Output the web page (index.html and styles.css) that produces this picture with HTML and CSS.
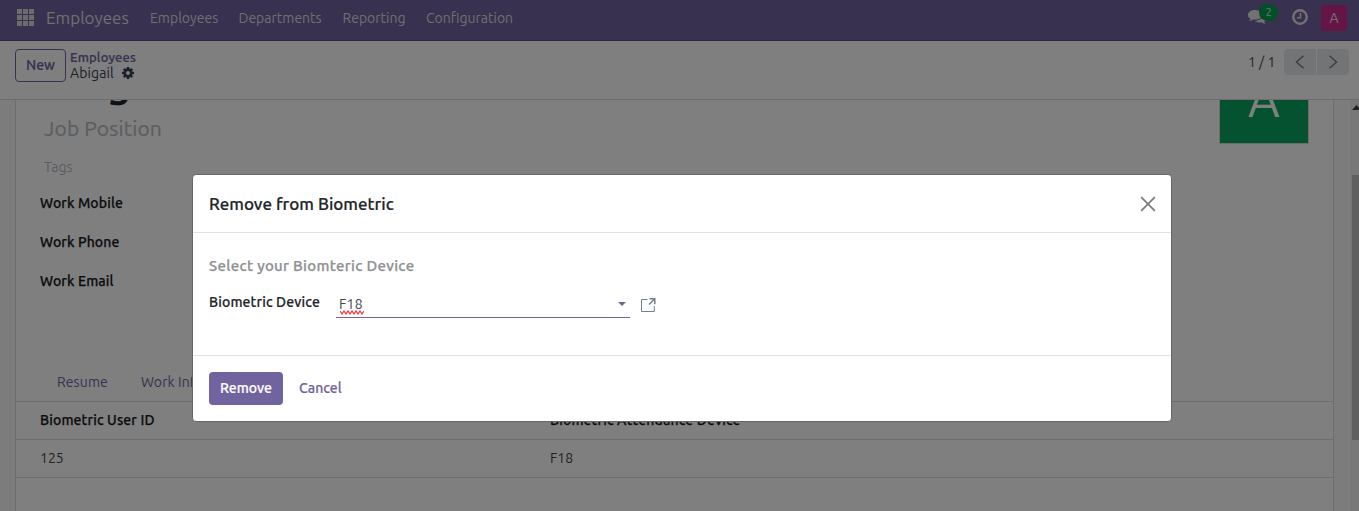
FILE: index.html
```html
<!DOCTYPE html>
<html lang="en">
<head>
<meta charset="utf-8">
<title>Employees</title>
<link rel="stylesheet" href="styles.css">
</head>
<body>
<div class="app">
  <header class="navbar">
    <svg class="apps" width="17" height="17" viewBox="0 0 17 17" fill="currentColor"><path d="M0 0h5v5H0zM6 0h5v5H6zM12 0h5v5h-5zM0 6h5v5H0zM6 6h5v5H6zM12 6h5v5h-5zM0 12h5v5H0zM6 12h5v5H6zM12 12h5v5h-5z"/></svg>
    <span class="brand">Employees</span>
    <nav class="menu">
      <span class="m-emp">Employees</span><span class="m-dep">Departments</span><span class="m-rep">Reporting</span><span class="m-conf">Configuration</span>
    </nav>
    <div class="systray">
      <div class="chat">
        <svg width="18" height="16" viewBox="0 0 18 16" fill="currentColor"><path d="M7 1C3.1 1 0 3.1 0 5.9c0 1.600 1 2.900 2.500 3.800-.2.900-.8 1.500-1.400 2.200 1.700-.2 3-.8 4-1.500.6.100 1.200.2 1.900.2 3.900 0 7-2.100 7-4.700S10.900 1 7 1z"/><path d="M15.200 5.600c.1 3.600-3.600 6.100-8.500 6.200 1.200 1 3.100 1.600 5.100 1.600.6 0 1.200 0 1.800-.2 1.100.9 2.300 1.400 3.900 1.600-.6-.6-1.200-1.300-1.400-2.100 1.300-.8 2-1.900 1.900-3.200 0-1.600-1.100-3-2.800-3.900z"/></svg>
        <span class="badge">2</span>
      </div>
      <svg class="clock" width="16" height="16" viewBox="0 0 16 16" fill="none" stroke="currentColor"><circle cx="8" cy="8" r="6.700" stroke-width="2.400"/><path d="M8.500 4v4.700H5" stroke-width="1.500"/></svg>
      <span class="user">A</span>
    </div>
  </header>
  <section class="control">
    <button class="new">New</button>
    <div class="crumbs">
      <span class="parent">Employees</span>
      <span class="current"><span class="who">Abigail</span>
        <svg width="12" height="12" viewBox="0 0 12 12"><g stroke="currentColor" stroke-width="2.600"><path d="M6 0v12M0 6h12M1.800 1.800l8.400 8.400M10.200 1.800l-8.400 8.400"/></g><circle cx="6" cy="6" r="3.200" fill="none" stroke="currentColor" stroke-width="2.400"/><circle cx="6" cy="6" r="2" fill="#fff"/></svg>
      </span>
    </div>
    <div class="pager">
      <span class="count">1 / 1</span>
      <span class="page prev"><svg width="10" height="14" viewBox="0 0 10 14"><path d="M8.500.8 1.500 7l7 6.200"/></svg></span>
      <span class="page next"><svg width="10" height="14" viewBox="0 0 10 14"><path d="M1.500.8l7 6.200-7 6.200"/></svg></span>
    </div>
  </section>
  <main class="content">
    <div class="sheet">
      <div class="top">
        <div class="titles">
          <div class="name">Abigail</div>
          <div class="job">Job Position</div>
          <div class="tags">Tags</div>
        </div>
        <div class="avatar"><span>A</span></div>
      </div>
      <div class="fields"><div>Work Mobile</div><div>Work Phone</div><div>Work Email</div></div>
      <div class="tabs"><span class="t1">Resume</span><span>Work Information</span></div>
      <div class="row head"><span>Biometric User ID</span><span>Biometric Attendance Device</span></div>
      <div class="row"><span>125</span><span>F18</span></div>
    </div>
    <div class="scroll"><svg width="7" height="5" viewBox="0 0 7 5"><path d="M0 5 4.500 0 9 5z" fill="#444"/></svg><div class="thumb"></div></div>
  </main>
</div>
<div class="backdrop"></div>
<div class="modal">
  <div class="modal-head">
    <h4>Remove from Biometric</h4>
    <svg width="16" height="16" viewBox="0 0 16 16"><path d="M1.200 1.200l13.600 13.600M14.800 1.200L1.200 14.800" stroke="#7b7b7b" stroke-width="1.700"/></svg>
  </div>
  <div class="modal-body">
    <div class="hint">Select your Biomteric Device</div>
    <div class="field">
      <label>Biometric Device</label>
      <div class="select">
        <span class="value">F18<svg class="wave" width="24" height="5" viewBox="0 0 24 5"><path d="M0 1l2 3 2-3 2 3 2-3 2 3 2-3 2 3 2-3 2 3 2-3 2 3 2-3" fill="none" stroke="#ff2b36" stroke-width="1.200"/></svg></span>
        <svg width="8" height="4" viewBox="0 0 8 4"><path d="M0 0h8L4 4z" fill="#71639e"/></svg>
      </div>
      <svg class="ext" width="15" height="15" viewBox="0 0 15 15" fill="none" stroke="#73808c"><path d="M6.500 1.500h-6v12h12.800V8"/><path d="M8.500.8h5.300v5.500M13.500 1L8 6.500" stroke-width="1.500"/></svg>
    </div>
  </div>
  <div class="modal-foot"><button class="remove">Remove</button><span class="cancel">Cancel</span></div>
</div>
</body>
</html>
```
FILE: styles.css
```css
* { box-sizing: border-box; }
body { margin: 0; width: 1359px; height: 511px; overflow: hidden; font: 14px/20px Ubuntu, "Noto Sans", sans-serif; color: #41464d; }
svg { display: block; flex: none; }
span, label, h4, button { white-space: nowrap; }
.app { display: flex; flex-direction: column; height: 511px; background: #fff; }
.navbar { height: 41px; flex: none; display: flex; align-items: center; padding: 0 12px 5px 17px; color: #dedede; background: #71639e; border-bottom: 1px solid #5a4f7f; }
.apps { color: #d8d8d8; margin-top: -1px; }
.brand { width: 116px; padding-left: 12px; font-size: 17px; }
.menu { display: flex; }
.m-emp { width: 88.500px; }
.m-dep { width: 104px; }
.m-rep { width: 83.500px; }
.systray { display: flex; align-items: center; margin: -1px 0 0 auto; color: #e4e4e4; }
.chat { position: relative; width: 44px; }
.badge { position: absolute; left: 11px; top: -5px; width: 19px; height: 17px; border-radius: 9px; background: #00a04a; font-size: 11px; line-height: 17px; text-align: center; }
.clock { margin-right: 13px; }
.user { width: 26px; height: 26px; border-radius: 3px; background: #c92a8c; font-size: 14px; line-height: 27px; text-align: center; margin-top: 1px; }
.control { height: 59px; flex: none; display: flex; align-items: flex-start; padding: 8px 10px 0 15px; border-bottom: 1px solid #dadada; }
.new { width: 51px; height: 33px; padding: 0 0 1px; border: 1px solid #71639e; border-radius: 4px; background: none; color: #71639e; font: 500 14px/20px Ubuntu, "Noto Sans", sans-serif; -webkit-text-stroke: .2px; }
.crumbs { display: flex; flex-direction: column; padding-left: 4px; }
.parent { color: #71639e; font-weight: 500; font-size: 13px; line-height: 16px; letter-spacing: .15px; -webkit-text-stroke: .2px; }
.current { display: flex; align-items: center; line-height: 16px; color: #374151; }
.who { width: 52px; letter-spacing: .1px; }
.pager { display: flex; margin-left: auto; }
.count { width: 36px; line-height: 26px; }
.page { width: 32px; height: 26px; display: flex; align-items: center; justify-content: center; background: #e7e9ed; }
.page path { fill: none; stroke: #777; stroke-width: 1.400; }
.prev { border-radius: 4px 0 0 4px; margin-right: 1px; }
.next { border-radius: 0 4px 4px 0; }
.content { height: 411px; display: flex; overflow: hidden; background: #f8f9fa; padding-left: 15px; }
.sheet { width: 1319px; flex: none; background: #fff; border: solid #dadada; border-width: 0 1px; }
.top { display: flex; justify-content: space-between; height: 83px; padding: 0 24px 0 28px; }
.name { height: 17px; font-size: 41px; line-height: 20px; font-weight: 500; color: #1f2227; -webkit-text-stroke: .6px; margin-top: -28px; margin-bottom: 26px; letter-spacing: .3px; }
.job { font-size: 21px; line-height: 26px; letter-spacing: .15px; color: #b7bcc3; -webkit-text-stroke: .2px; }
.tags { margin-top: 16px; color: #b7bcc3; }
.avatar { width: 90px; height: 44px; overflow: hidden; background: #08a55f; border: solid #dadada; border-width: 0 1px 1px; color: #fff; font-size: 49px; text-align: center; }
.avatar span { display: block; line-height: 60px; margin-top: -31px; }
.fields { height: 180px; padding: 10px 0 0 24px; font-weight: 500; color: #17191d; letter-spacing: .14px; -webkit-text-stroke: .25px; }
.fields div { height: 39px; }
.tabs { height: 39px; display: flex; padding: 9px 0 0 41px; color: #71639e; border-bottom: 1px solid #dadada; letter-spacing: .1px; }
.t1 { width: 84px; }
.row { height: 38px; display: grid; grid-template-columns: 510px 1fr; align-items: center; padding: 0 0 1px 24px; border-bottom: 1px solid #dadada; }
.head { font-weight: 500; color: #17191d; letter-spacing: .14px; -webkit-text-stroke: .25px; }
.scroll { width: 9px; margin-left: 16px; padding: 5px 0 0 2px; background: #f1f1f1; overflow: hidden; }
.thumb { height: 265px; margin-top: 65px; background: #c1c1c1; }
.backdrop { position: absolute; inset: 0; background: rgba(0,0,0,.5); }
.modal { position: absolute; left: 192px; top: 174px; width: 980px; height: 248px; border: 1px solid #666; border-radius: 4px; background: #fff; }
.modal-head { height: 58px; display: flex; align-items: center; justify-content: space-between; padding: 0 15px 0 16px; border-bottom: 1px solid #dee2e6; }
h4 { margin: 0; font-size: 17px; font-weight: 500; color: #212529; -webkit-text-stroke: .2px; }
.modal-body { height: 122px; padding: 23px 16px 0; }
.hint { color: #8f9193; font-weight: 500; font-size: 15px; letter-spacing: .31px; -webkit-text-stroke: .25px; }
.field { display: flex; margin-top: 14px; }
label { width: 127px; margin-top: 2px; font-weight: 500; color: #212529; letter-spacing: .14px; -webkit-text-stroke: .2px; }
.select { width: 294px; height: 28px; display: flex; align-items: center; justify-content: space-between; padding: 0 4px 0 3px; border-bottom: 1px solid #71639e; }
.value { position: relative; letter-spacing: .2px; }
.wave { position: absolute; left: 1px; top: 16px; }
.select > svg { margin-top: 1px; }
.ext { margin: 8px 0 0 11px; }
.modal-foot { height: 66px; display: flex; align-items: center; padding-left: 16px; border-top: 1px solid #dee2e6; color: #71639e; font-weight: 500; }
.remove { width: 74px; height: 33px; margin-right: 16px; padding: 0 0 1px; border: 0; border-radius: 4px; background: #71639e; color: #fff; font: 500 14px/20px Ubuntu, "Noto Sans", sans-serif; -webkit-text-stroke: .2px; }
.cancel { padding-bottom: 1px; -webkit-text-stroke: .2px; }
```
